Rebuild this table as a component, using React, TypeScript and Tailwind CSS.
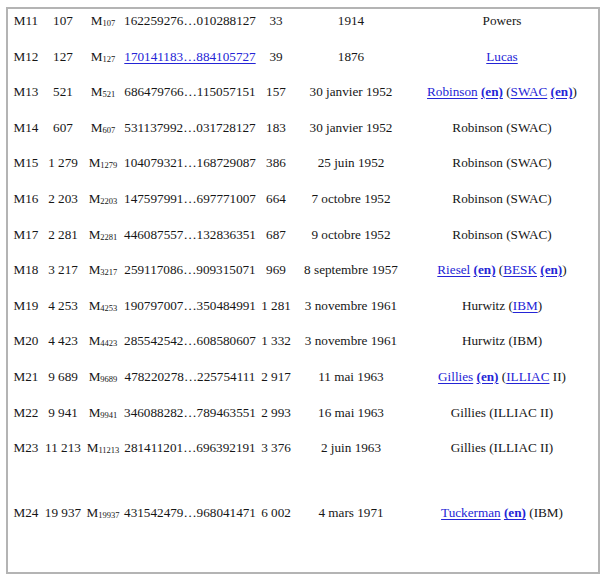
import React from 'react'

type Cell = React.ReactNode

const L = ({ children }: { children: React.ReactNode }) => (
  <a className="text-[#2424d6] underline underline-offset-[2px]">{children}</a>
)
const En = () => (
  <a className="text-[#2424d6] font-bold underline underline-offset-[2px]">(en)</a>
)

const Mp = ({ n }: { n: string }) => (
  <span>
    M<span className="text-[8.5px] relative top-[1px]">{n}</span>
  </span>
)

const ROWS: { id: string; p: string; digits: Cell; len: string; date: string; who: Cell; gap?: boolean }[] = [
  { id: 'M11', p: '107', digits: '162259276…010288127', len: '33', date: '1914', who: 'Powers' },
  { id: 'M12', p: '127', digits: <L>170141183…884105727</L>, len: '39', date: '1876', who: <L>Lucas</L> },
  {
    id: 'M13', p: '521', digits: '686479766…115057151', len: '157', date: '30 janvier 1952',
    who: <><L>Robinson</L> <En /> (<L>SWAC</L> <En />)</>,
  },
  { id: 'M14', p: '607', digits: '531137992…031728127', len: '183', date: '30 janvier 1952', who: 'Robinson (SWAC)' },
  { id: 'M15', p: '1 279', digits: '104079321…168729087', len: '386', date: '25 juin 1952', who: 'Robinson (SWAC)' },
  { id: 'M16', p: '2 203', digits: '147597991…697771007', len: '664', date: '7 octobre 1952', who: 'Robinson (SWAC)' },
  { id: 'M17', p: '2 281', digits: '446087557…132836351', len: '687', date: '9 octobre 1952', who: 'Robinson (SWAC)' },
  {
    id: 'M18', p: '3 217', digits: '259117086…909315071', len: '969', date: '8 septembre 1957',
    who: <><L>Riesel</L> <En /> (<L>BESK</L> <En />)</>,
  },
  { id: 'M19', p: '4 253', digits: '190797007…350484991', len: '1 281', date: '3 novembre 1961', who: <>Hurwitz (<L>IBM</L>)</> },
  { id: 'M20', p: '4 423', digits: '285542542…608580607', len: '1 332', date: '3 novembre 1961', who: 'Hurwitz (IBM)' },
  {
    id: 'M21', p: '9 689', digits: '478220278…225754111', len: '2 917', date: '11 mai 1963',
    who: <><L>Gillies</L> <En /> (<L>ILLIAC</L> II)</>,
  },
  { id: 'M22', p: '9 941', digits: '346088282…789463551', len: '2 993', date: '16 mai 1963', who: 'Gillies (ILLIAC II)' },
  { id: 'M23', p: '11 213', digits: '281411201…696392191', len: '3 376', date: '2 juin 1963', who: 'Gillies (ILLIAC II)' },
  {
    id: 'M24', p: '19 937', digits: '431542479…968041471', len: '6 002', date: '4 mars 1971',
    who: <><L>Tuckerman</L> <En /> (IBM)</>, gap: true,
  },
]

export default function App() {
  return (
    <div className="w-[609px] h-[583px] bg-white pt-[7px] pl-[6px]" style={{ fontFamily: '"Liberation Serif", "Times New Roman", serif' }}>
      <div className="w-[594px] h-[567px] border-2 border-[#b4b4b4] text-[13.2px] leading-[15px] text-[#161616]">
        {ROWS.map(r => (
          <div
            key={r.id}
            className={`grid grid-cols-[34px_40px_40px_134px_38px_112px_190px] h-[35.6px] pt-[4px] pl-[1px] text-center whitespace-nowrap ${r.gap ? 'mt-[29.6px]' : ''}`}
          >
            <span>{r.id}</span>
            <span>{r.p}</span>
            <Mp n={r.p.replace(' ', '')} />
            <span>{r.digits}</span>
            <span>{r.len}</span>
            <span>{r.date}</span>
            <span>{r.who}</span>
          </div>
        ))}
      </div>
    </div>
  )
}
